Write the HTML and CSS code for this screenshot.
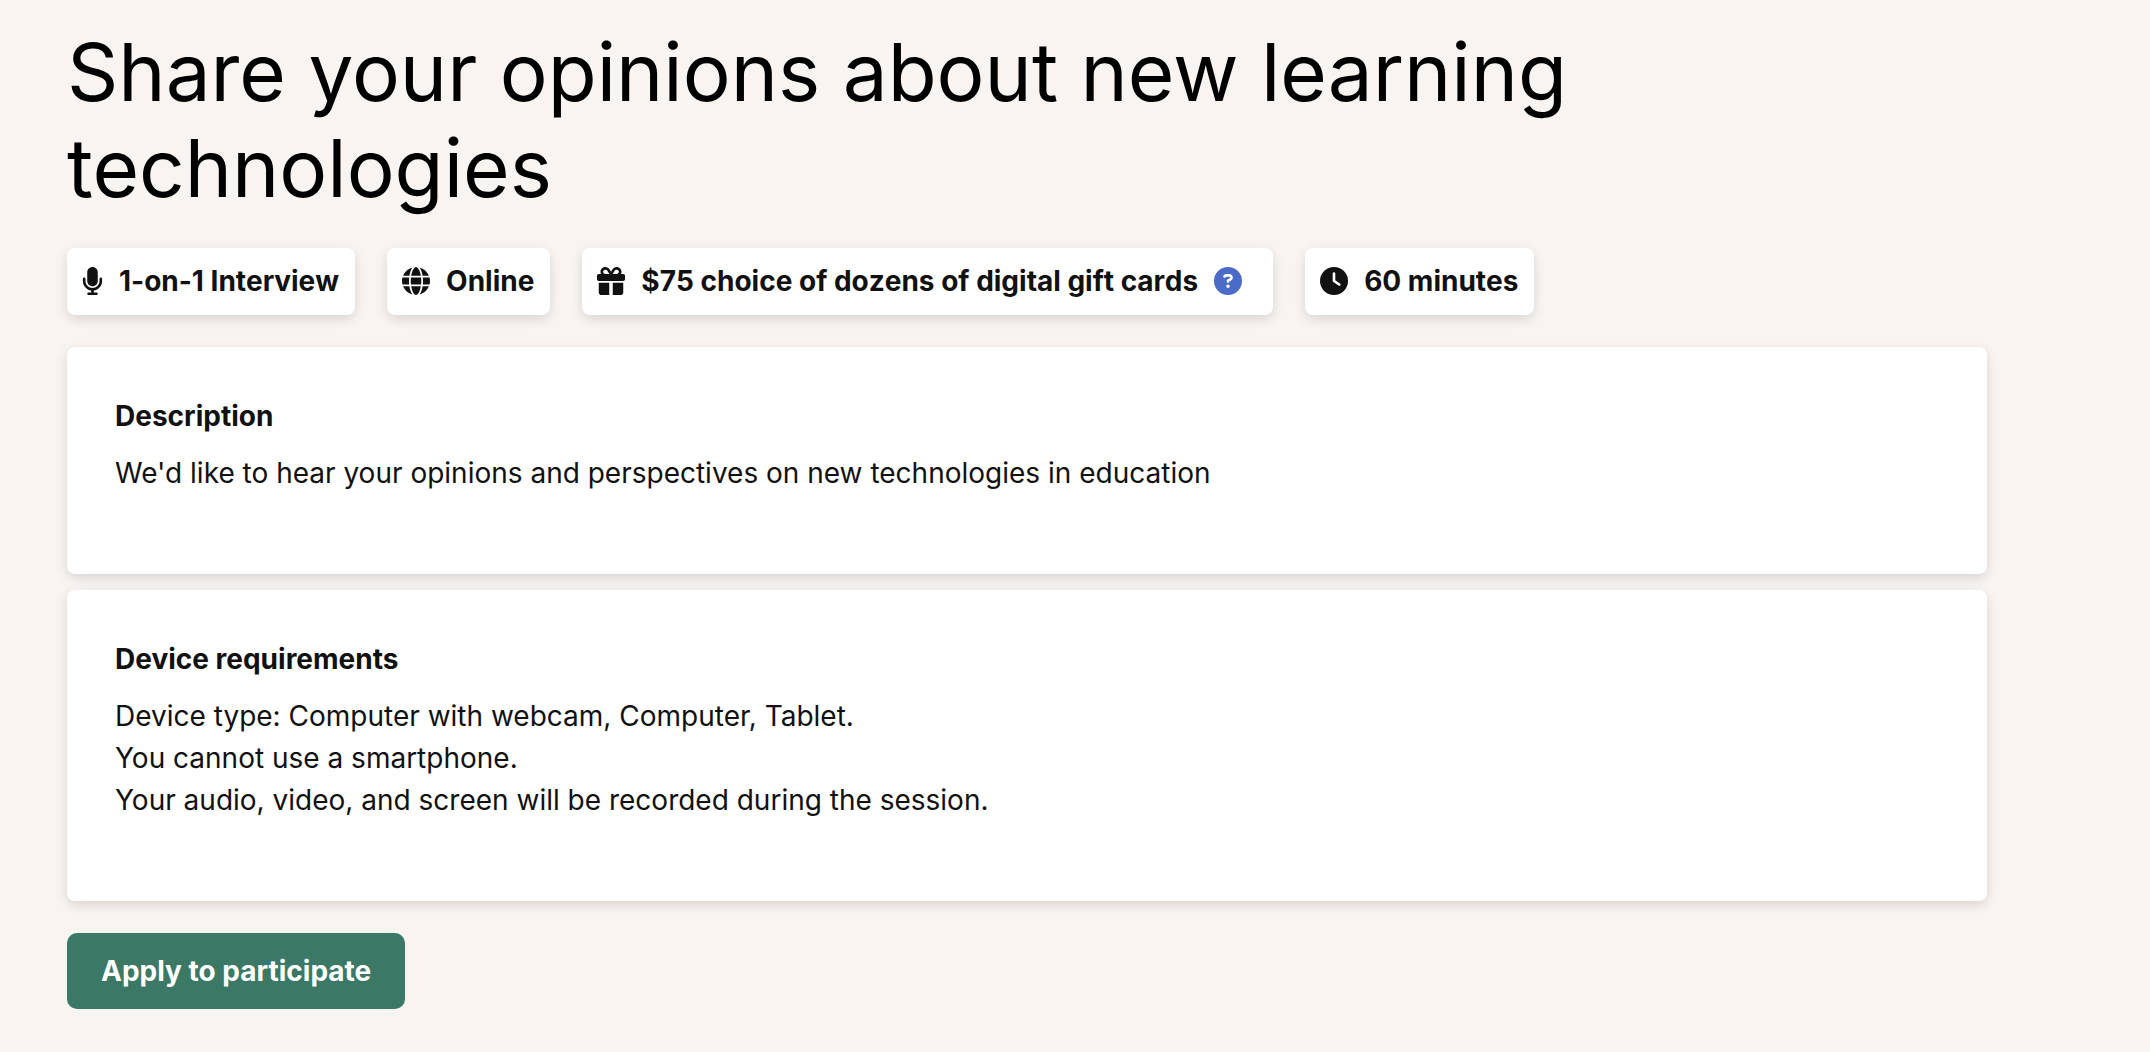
FILE: index.html
```html
<!DOCTYPE html>
<html lang="en">
<head>
<meta charset="utf-8">
<meta name="viewport" content="width=device-width, initial-scale=1">
<title>Share your opinions about new learning technologies</title>
<link rel="stylesheet" href="styles.css">
</head>
<body>
<main class="study">
  <h1 class="study-title">Share your opinions about new learning technologies</h1>

  <ul class="facts">
    <li class="fact">
      <svg class="icon icon-narrow" viewBox="0 0 384 512" aria-hidden="true"><path d="M192 0C139 0 96 43 96 96V256c0 53 43 96 96 96s96-43 96-96V96c0-53-43-96-96-96zM64 216c0-13.300-10.700-24-24-24s-24 10.700-24 24v40c0 89.100 66.200 162.700 152 174.400V464H120c-13.300 0-24 10.700-24 24s10.700 24 24 24h72 72c13.300 0 24-10.700 24-24s-10.700-24-24-24H216V430.400c85.800-11.700 152-85.300 152-174.400V216c0-13.300-10.700-24-24-24s-24 10.700-24 24v40c0 70.700-57.300 128-128 128s-128-57.300-128-128V216z"/></svg>
      <span>1-on-1 Interview</span>
    </li>
    <li class="fact">
      <svg class="icon" viewBox="0 0 512 512" aria-hidden="true"><path d="M352 256c0 22.200-1.200 43.600-3.300 64H163.300c-2.200-20.400-3.300-41.800-3.300-64s1.200-43.600 3.300-64H348.700c2.200 20.400 3.300 41.800 3.300 64zm28.800-64H503.900c5.300 20.500 8.100 41.900 8.100 64s-2.800 43.500-8.100 64H380.800c2.100-20.600 3.200-42 3.200-64s-1.100-43.400-3.200-64zm112.600-32H376.700c-10-63.900-29.800-117.400-55.300-151.600c78.300 20.700 142 77.500 171.900 151.600zm-149.100 0H167.700c6.100-36.400 15.500-68.600 27-94.700c10.500-23.600 22.200-40.700 33.500-51.500C239.400 3.200 248.700 0 256 0s16.600 3.200 27.800 13.800c11.300 10.800 23 27.900 33.500 51.500c11.600 26 20.900 58.200 27 94.700zm-209 0H18.600C48.600 85.900 112.200 29.100 190.600 8.400C165.100 42.600 145.300 96.100 135.300 160zM8.100 192H131.200c-2.100 20.600-3.200 42-3.200 64s1.100 43.400 3.200 64H8.100C2.800 299.500 0 278.100 0 256s2.800-43.500 8.100-64zM194.700 446.600c-11.600-26-20.900-58.200-27-94.600H344.300c-6.100 36.400-15.500 68.600-27 94.600c-10.500 23.600-22.200 40.700-33.500 51.500C272.600 508.800 263.300 512 256 512s-16.600-3.200-27.800-13.800c-11.300-10.800-23-27.900-33.500-51.500zM135.300 352c10 63.900 29.800 117.400 55.300 151.600C112.200 482.900 48.600 426.100 18.600 352H135.300zm358.100 0c-30 74.100-93.600 130.900-171.900 151.600c25.500-34.200 45.200-87.700 55.300-151.600H493.400z"/></svg>
      <span>Online</span>
    </li>
    <li class="fact">
      <svg class="icon" viewBox="0 0 512 512" aria-hidden="true"><path d="M190.500 68.800L225.300 128H224 152c-22.100 0-40-17.900-40-40s17.900-40 40-40h2.200c14.900 0 28.800 7.900 36.300 20.800zM64 88c0 14.400 3.500 28 9.600 40H32c-17.700 0-32 14.300-32 32v64c0 17.700 14.300 32 32 32H480c17.700 0 32-14.300 32-32V160c0-17.700-14.300-32-32-32H438.400c6.100-12 9.600-25.600 9.600-40c0-48.600-39.400-88-88-88h-2.200c-31.900 0-61.500 16.900-77.700 44.400L256 85.500l-24.100-41C215.700 16.900 186.100 0 154.200 0H152C103.400 0 64 39.400 64 88zm336 0c0 22.100-17.900 40-40 40H288h-1.300l34.800-59.200C329.100 55.900 342.900 48 357.800 48H360c22.100 0 40 17.900 40 40zM32 288V464c0 26.500 21.500 48 48 48H224V288H32zM288 512H432c26.500 0 48-21.500 48-48V288H288V512z"/></svg>
      <span>$75 choice of dozens of digital gift cards</span>
      <button class="help" type="button" aria-label="About gift cards">
        <svg class="icon" viewBox="0 0 512 512" aria-hidden="true"><path d="M256 512A256 256 0 1 0 256 0a256 256 0 1 0 0 512zM169.800 165.300c7.900-22.300 29.100-37.300 52.800-37.300h58.300c34.900 0 63.100 28.300 63.100 63.100c0 22.600-12.100 43.500-31.700 54.800L280 264.400c-.2 13-10.900 23.600-24 23.600c-13.300 0-24-10.700-24-24V250.500c0-8.600 4.600-16.500 12.100-20.800l44.300-25.400c4.700-2.700 7.600-7.700 7.600-13.100c0-8.400-6.800-15.100-15.100-15.100H222.600c-3.400 0-6.400 2.100-7.500 5.300l-.4 1.200c-4.400 12.500-18.200 19-30.600 14.600s-19-18.200-14.600-30.600l.4-1.200zM224 352a32 32 0 1 1 64 0 32 32 0 1 1 -64 0z"/></svg>
      </button>
    </li>
    <li class="fact">
      <svg class="icon" viewBox="0 0 512 512" aria-hidden="true"><path d="M256 0a256 256 0 1 1 0 512A256 256 0 1 1 256 0zM232 120V256c0 8 4 15.500 10.700 20l96 64c11 7.400 25.900 4.400 33.300-6.700s4.400-25.900-6.700-33.300L280 243.200V120c0-13.300-10.700-24-24-24s-24 10.700-24 24z"/></svg>
      <span>60 minutes</span>
    </li>
  </ul>

  <section class="card">
    <h2 class="card-title">Description</h2>
    <p class="card-text">We'd like to hear your opinions and perspectives on new technologies in education</p>
  </section>

  <section class="card">
    <h2 class="card-title">Device requirements</h2>
    <p class="card-text">Device type: Computer with webcam, Computer, Tablet.<br>You cannot use a smartphone.<br>Your audio, video, and screen will be recorded during the session.</p>
  </section>

  <button class="apply" type="button">Apply to participate</button>
</main>
</body>
</html>
```

FILE: styles.css
```css
* {
  box-sizing: border-box;
}

body {
  margin: 0;
  background: #f8f4f1;
  color: #111;
  font-family: Inter, "Liberation Sans", sans-serif;
  font-size: 28px;
  line-height: 42px;
}

.study {
  max-width: 2054px;
  padding: 24px 67px 43px;
}

.study-title {
  margin: 0 0 32px;
  color: #000;
  font-size: 80px;
  font-weight: 400;
  line-height: 96px;
}

.facts {
  display: flex;
  flex-wrap: wrap;
  gap: 32px;
  margin: 0 0 32px;
  padding: 0;
  list-style: none;
}

.fact {
  display: flex;
  align-items: center;
  gap: 16px;
  padding: 12px 16px 13px 15px;
  border-radius: 8px;
  background: #fff;
  box-shadow: 0 4px 12px rgba(0, 0, 0, 0.13);
  font-weight: 700;
  font-feature-settings: "calt" 0;
  font-kerning: none;
}

.icon {
  display: block;
  width: 28px;
  height: 28px;
  fill: currentColor;
}

.icon-narrow {
  width: 21px;
}

.help {
  margin-right: 15px;
  padding: 0;
  border: 0;
  border-radius: 50%;
  background: none;
  color: #4a6cc7;
  cursor: pointer;
}

.card {
  margin-bottom: 16px;
  padding: 48px 48px 80px;
  border-radius: 8px;
  background: #fff;
  box-shadow: 0 4px 12px rgba(0, 0, 0, 0.13);
}

.card-title {
  margin: 0 0 15px;
  font-size: 28px;
  font-weight: 700;
  line-height: 42px;
}

.card-text {
  margin: 0;
}

.apply {
  margin-top: 16px;
  padding: 17px 34px;
  border: 0;
  border-radius: 10px;
  background: #3b7865;
  color: #fff;
  font: inherit;
  font-weight: 700;
  cursor: pointer;
}
```
